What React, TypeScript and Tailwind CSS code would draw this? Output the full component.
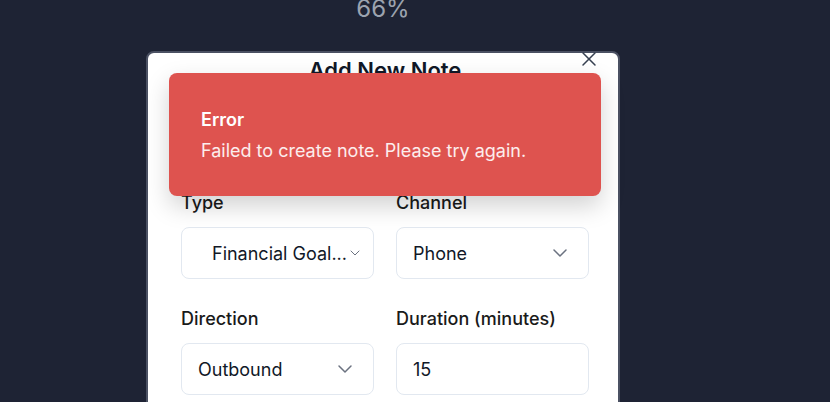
import { ChevronDown, X } from 'lucide-react';

function SelectBox({ value, small }: { value: string; small?: boolean }) {
  return (
    <div
      className={`flex h-[52px] items-center justify-between rounded-lg border border-[#e2e8f0] bg-white pr-4 ${
        small ? 'pl-[30px]' : 'pl-4'
      }`}
    >
      <span className="whitespace-nowrap text-[18px] text-[#111827]">{value}</span>
      {small ? (
        <ChevronDown className="h-4 w-4 shrink-0 text-[#6b7280]" strokeWidth={1.5} />
      ) : (
        <ChevronDown className="h-6 w-6 shrink-0 text-[#6b7280]" strokeWidth={1.5} />
      )}
    </div>
  );
}

function Field({ label, children }: { label: string; children: React.ReactNode }) {
  return (
    <div>
      <div className="mb-[10px] text-[18px] font-medium leading-7 text-[#1a1a1a]">{label}</div>
      {children}
    </div>
  );
}

export default function App() {
  return (
    <div
      className="h-[402px] w-[830px] overflow-hidden bg-[#1e2334]"
      style={{ fontFamily: 'Inter, "Noto Sans", sans-serif' }}
    >
      <div className="flex w-[766px] flex-col items-center">
        <div className="-mt-[7px] text-[24px] leading-8 text-[#9ca3af]">66%</div>

        <div className="relative mt-[26px] w-[474px] rounded-lg border-2 border-[#4b5163] bg-white pb-10 pl-[33px] pr-[29px] pt-[3px]">
          <button className="absolute -top-[6px] right-[17px] text-[#374151]">
            <X className="h-6 w-6" strokeWidth={1.5} />
          </button>

          <h2 className="text-center text-[22px] font-semibold leading-7 text-[#111827]">
            Add New Note
          </h2>

          <div className="mt-[105px] grid grid-cols-2 gap-x-[22px] gap-y-[26px]">
            <Field label="Type">
              <SelectBox value="Financial Goal..." small />
            </Field>
            <Field label="Channel">
              <SelectBox value="Phone" />
            </Field>
            <Field label="Direction">
              <SelectBox value="Outbound" />
            </Field>
            <Field label="Duration (minutes)">
              <div className="flex h-[52px] items-center rounded-lg border border-[#e2e8f0] bg-white px-4">
                <span className="text-[18px] text-[#111827]">15</span>
              </div>
            </Field>
          </div>

          <div className="absolute left-[21px] top-[20px] flex h-[123px] w-[432px] flex-col justify-center gap-1 rounded-lg bg-[#de534f] px-8 shadow-[0_10px_25px_rgba(0,0,0,0.18)]">
            <div className="text-[18px] font-semibold leading-[27px] text-white">Error</div>
            <div className="text-[18px] leading-[27px] text-white/90">
              Failed to create note. Please try again.
            </div>
          </div>
        </div>
      </div>
    </div>
  );
}
